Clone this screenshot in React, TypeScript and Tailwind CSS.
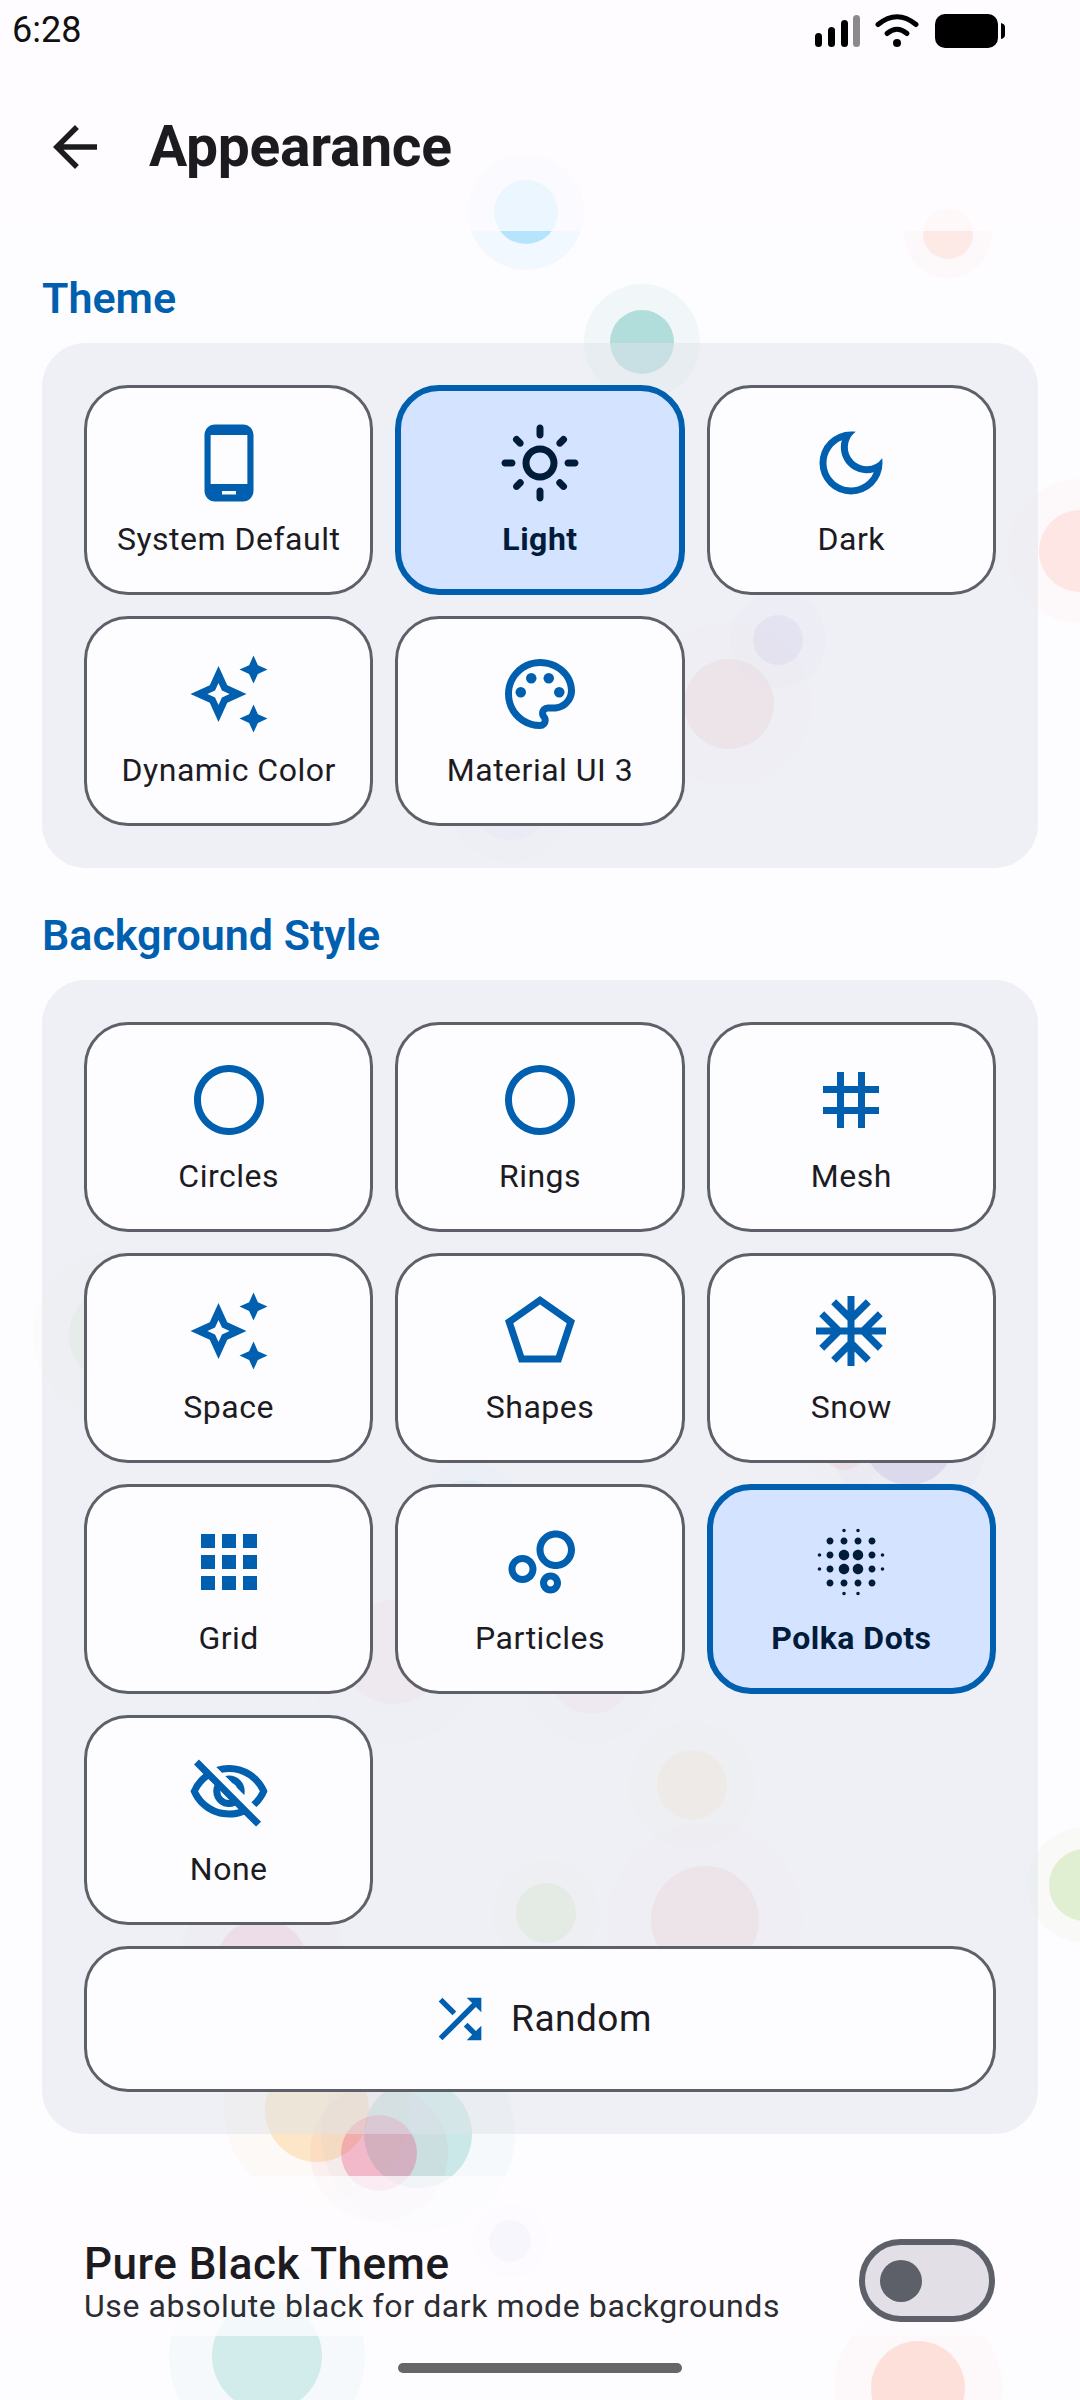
import React from "react";
import {
  MdArrowBack, MdPhoneAndroid, MdOutlineLightMode, MdOutlineDarkMode, MdOutlineAutoAwesome, MdOutlinePalette,
  MdOutlineCircle, MdTag, MdOutlinePentagon, MdAcUnit, MdApps, MdOutlineBubbleChart, MdBlurOn,
  MdOutlineVisibilityOff, MdShuffle,
} from "react-icons/md";

type C = [number, number, number, number, string, number];
// x, y, inner radius, outer radius, rgb, inner alpha
const circles: C[] = [
  [526, 212, 32, 58, "41,182,246", 0.35],
  [948, 234, 25, 44, "255,112,67", 0.13],
  [642, 342, 32, 58, "38,166,154", 0.36],
  [1080, 551, 41, 72, "255,112,67", 0.15],
  [778, 640, 25, 48, "126,87,194", 0.15],
  [729, 704, 45, 82, "236,80,90", 0.14],
  [510, 800, 40, 62, "126,87,194", 0.06],
  [117, 1335, 48, 84, "156,204,101", 0.16],
  [467, 1520, 40, 58, "41,182,246", 0.12],
  [909, 1440, 45, 78, "126,87,194", 0.28],
  [844, 1450, 20, 40, "239,83,80", 0.16],
  [394, 1652, 52, 91, "239,83,80", 0.07],
  [591, 1673, 41, 70, "236,64,122", 0.07],
  [692, 1785, 35, 63, "255,167,38", 0.12],
  [546, 1913, 30, 53, "156,204,101", 0.22],
  [705, 1920, 54, 97, "239,83,80", 0.13],
  [1085, 1885, 36, 58, "156,204,101", 0.3],
  [262, 1965, 46, 83, "236,64,122", 0.2],
  [317, 2110, 52, 93, "255,167,38", 0.26],
  [418, 2134, 54, 97, "38,166,154", 0.24],
  [379, 2153, 38, 69, "236,64,122", 0.34],
  [510, 2241, 21, 37, "126,87,194", 0.16],
  [267, 2356, 55, 98, "38,166,154", 0.2],
  [918, 2388, 47, 84, "255,112,67", 0.2],
];

function Blob({ c }: { c: C }) {
  const [x, y, r, o, rgb, a] = c;
  return (
    <>
      <div className="absolute rounded-full" style={{ left: x - o, top: y - o, width: o * 2, height: o * 2, background: `rgba(${rgb},${a * 0.15})` }} />
      <div className="absolute rounded-full" style={{ left: x - r, top: y - r, width: r * 2, height: r * 2, background: `rgba(${rgb},${a * 0.87})` }} />
    </>
  );
}

type IconT = React.ComponentType<{ size?: number; className?: string }>;

function Tile({ Icon, label, on }: { Icon: IconT; label: string; on?: boolean }) {
  return (
    <div
      className={
        on
          ? "h-[210px] rounded-[44px] border-[6px] border-[#005fae] bg-[#d4e3ff] flex flex-col items-center pt-[30px]"
          : "h-[210px] rounded-[44px] border-[3px] border-[#5d6068] bg-[#fdfcff] flex flex-col items-center pt-[33px]"
      }
    >
      <Icon size={84} className={on ? "text-[#001c3a] shrink-0" : "text-[#005fae] shrink-0"} />
      <div
        className={
          on
            ? "mt-[14px] text-[32px] leading-[40px] tracking-[0.5px] font-bold text-[#001c3a]"
            : "mt-[14px] text-[32px] leading-[40px] tracking-[0.5px] text-[#1c1b1f]"
        }
      >
        {label}
      </div>
    </div>
  );
}

function Heading({ children }: { children: React.ReactNode }) {
  return <div className="h-[112px] px-[42px] pt-[43px] text-[43px] leading-[48px] font-semibold text-[#005fae]">{children}</div>;
}

export default function App() {
  return (
    <div className="relative w-[1080px] h-[2400px] overflow-hidden bg-[#fdfcff] font-[Roboto,sans-serif]">
      <div className="absolute inset-0">
        {circles.map((c, i) => (
          <Blob key={i} c={c} />
        ))}
      </div>

      <div className="relative flex flex-col">
        <div className="h-[231px] bg-[#fdfcff]/75">
          <div className="h-[60px] pt-[12px] pl-[12px] pr-[75px] flex justify-between items-start">
            <div className="text-[36px] leading-[36px] text-[#111]">6:28</div>
            <svg width="190" height="40" viewBox="815 12 190 40">
              <rect x="815" y="33" width="7" height="14" rx="3.5" fill="#000" />
              <rect x="828" y="27" width="7" height="20" rx="3.5" fill="#000" />
              <rect x="841" y="20" width="7" height="27" rx="3.5" fill="#000" />
              <rect x="853" y="15" width="7" height="32" rx="3.5" fill="#8a8a8a" />
              <path d="M878 24.5 Q897 9 916 24.5" fill="none" stroke="#000" strokeWidth="5" strokeLinecap="round" />
              <path d="M887 33.5 Q897 25 907 33.5" fill="none" stroke="#000" strokeWidth="5" strokeLinecap="round" />
              <circle cx="897" cy="43" r="4" fill="#000" />
              <rect x="935" y="14" width="63" height="34" rx="10" fill="#000" />
              <path d="M1001 23 q4 1 4 4 v8 q0 3 -4 4 z" fill="#000" />
            </svg>
          </div>
          <div className="h-[171px] pt-[54px] pl-[42px] flex items-start">
            <MdArrowBack size={66} className="text-[#1c1b1f] shrink-0" />
            <div className="ml-[41px] text-[57px] leading-[66px] font-bold tracking-[-0.3px] text-[#1c1b1f]">Appearance</div>
          </div>
        </div>

        <Heading>Theme</Heading>
        <div className="mx-[42px] p-[42px] rounded-[44px] bg-[#e0e3eb]/50 grid grid-cols-3 gap-x-[22px] gap-y-[21px]">
          <Tile Icon={MdPhoneAndroid} label="System Default" />
          <Tile Icon={MdOutlineLightMode} label="Light" on />
          <Tile Icon={MdOutlineDarkMode} label="Dark" />
          <Tile Icon={MdOutlineAutoAwesome} label="Dynamic Color" />
          <Tile Icon={MdOutlinePalette} label="Material UI 3" />
        </div>

        <Heading>Background Style</Heading>
        <div className="mx-[42px] p-[42px] rounded-[44px] bg-[#e0e3eb]/50 grid grid-cols-3 gap-x-[22px] gap-y-[21px]">
          <Tile Icon={MdOutlineCircle} label="Circles" />
          <Tile Icon={MdOutlineCircle} label="Rings" />
          <Tile Icon={MdTag} label="Mesh" />
          <Tile Icon={MdOutlineAutoAwesome} label="Space" />
          <Tile Icon={MdOutlinePentagon} label="Shapes" />
          <Tile Icon={MdAcUnit} label="Snow" />
          <Tile Icon={MdApps} label="Grid" />
          <Tile Icon={MdOutlineBubbleChart} label="Particles" />
          <Tile Icon={MdBlurOn} label="Polka Dots" on />
          <Tile Icon={MdOutlineVisibilityOff} label="None" />
          <div className="col-span-3 h-[146px] rounded-[44px] border-[3px] border-[#5d6068] bg-[#fdfcff] flex items-center justify-center gap-[19px]">
            <MdShuffle size={64} className="text-[#005fae] shrink-0" />
            <div className="text-[37px] leading-[44px] tracking-[0.5px] text-[#1c1b1f]">Random</div>
          </div>
        </div>

        <div className="mt-[42px] h-[160px] bg-[#fdfcff]/75 pt-[63px] pl-[84px] pr-[85px] flex items-start justify-between">
          <div className="pt-[1px]">
            <div className="text-[44px] leading-[48px] font-medium tracking-[0.5px] text-[#1c1b1f]">Pure Black Theme</div>
            <div className="text-[32px] leading-[36px] tracking-[0.6px] text-[#2b2d33]">Use absolute black for dark mode backgrounds</div>
          </div>
          <div className="w-[136px] h-[83px] rounded-full border-[6px] border-[#5d6068] bg-[#e3dfe7] flex items-center pl-[15px]">
            <div className="w-[42px] h-[42px] rounded-full bg-[#5d6068]" />
          </div>
        </div>

        <div className="mt-[27px] mx-auto w-[284px] h-[10px] rounded-full bg-[#666]" />
      </div>
    </div>
  );
}
